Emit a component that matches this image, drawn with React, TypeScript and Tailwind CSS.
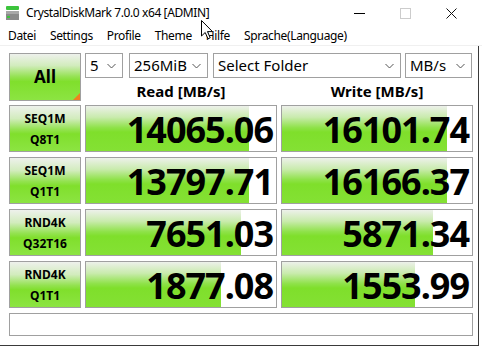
import React from "react";

const rows = [
  { l1: "SEQ1M", l2: "Q8T1", r: "14065.06", rf: 163, w: "16101.74", wf: 165 },
  { l1: "SEQ1M", l2: "Q1T1", r: "13797.71", rf: 163, w: "16166.37", wf: 165 },
  { l1: "RND4K", l2: "Q32T16", r: "7651.03", rf: 155, w: "5871.34", wf: 151 },
  { l1: "RND4K", l2: "Q1T1", r: "1877.08", rf: 135, w: "1553.99", wf: 133 },
];

function Chevron() {
  return (
    <svg width="9" height="6" viewBox="0 0 9 6" className="shrink-0">
      <path d="M0.5 1 L4.5 5 L8.5 1" fill="none" stroke="#555" strokeWidth="1" />
    </svg>
  );
}

function Combo({ text, w }: { text: string; w: string }) {
  return (
    <div className={`${w} h-[25px] border border-[#a0a0a0] bg-white flex items-center justify-between pl-[4px] pr-[6px]`}>
      <span className="text-[15px] leading-none text-black">{text}</span>
      <Chevron />
    </div>
  );
}

function Cell({ value, fill }: { value: string; fill: number }) {
  return (
    <div className="relative w-[192px] h-full border border-[#a0a0a0] bg-white">
      <div
        className="absolute left-0 top-0 bottom-0 bg-[linear-gradient(to_bottom,#edf1ea_0%,#c9ebad_25%,#8fe24a_48%,#7fdf2b_58%,#84e134_100%)]"
        style={{ width: fill }}
      />
      <div className="relative h-full flex items-center justify-end pr-[3px] pt-[3px] text-[36px] font-bold tracking-[-1px] text-black leading-[40px]">
        {value}
      </div>
    </div>
  );
}

function LabelBtn({ l1, l2 }: { l1: string; l2: string }) {
  return (
    <div className="w-[72px] h-full border border-[#a0a0a0] bg-[linear-gradient(to_bottom,#eef1ec_0%,#d2ecbd_28%,#93e250_52%,#80df2c_62%,#8ce442_100%)] flex flex-col items-center justify-center text-[12px] font-bold leading-[21px] text-black">
      <span>{l1}</span>
      <span>{l2}</span>
    </div>
  );
}

export default function App() {
  return (
    <div className="relative w-[482px] h-[347px] bg-white overflow-hidden font-['Noto_Sans',sans-serif] text-black">
      {/* Title bar */}
      <div className="h-[26px] flex items-center">
        <div className="w-[26px] h-full flex items-center justify-center pl-[1px]">
          <svg width="16" height="16" viewBox="0 0 16 16">
            <rect x="0" y="1" width="13" height="4" rx="1" fill="#3cc43c" />
            <rect x="0" y="6" width="13" height="9" fill="#8a8a8a" />
            <rect x="0" y="6" width="13" height="3" fill="#a8a8a8" />
            <rect x="1" y="11" width="3" height="2" fill="#3cc43c" />
          </svg>
        </div>
        <span className="text-[12px] leading-none tracking-[-0.4px]">CrystalDiskMark 7.0.0 x64 [ADMIN]</span>
        <div className="ml-auto flex items-center h-full">
          <div className="w-[46px] h-full flex items-center justify-center">
            <div className="w-[11px] h-px bg-black" />
          </div>
          <div className="w-[46px] h-full flex items-center justify-center">
            <div className="w-[11px] h-[11px] border border-[#cccccc]" />
          </div>
          <div className="w-[46px] h-full flex items-center justify-center">
            <svg width="11" height="11" viewBox="0 0 11 11">
              <path d="M0.5 0.5 L10.5 10.5 M10.5 0.5 L0.5 10.5" stroke="#111" strokeWidth="1" />
            </svg>
          </div>
          <div className="w-[8px]" />
        </div>
      </div>

      {/* Menu bar */}
      <div className="h-[20px] flex items-center gap-[14px] pl-[8px] text-[12px] leading-none tracking-[-0.35px] border-b border-[#f0f0f0]">
        <span>Datei</span>
        <span>Settings</span>
        <span>Profile</span>
        <span>Theme</span>
        <span>Hilfe</span>
        <span>Sprache(Language)</span>
      </div>

      {/* Content */}
      <div className="relative border-r border-b border-[#3a3a3a] w-[479px] h-[300px] pl-[9px] pt-[7px] flex flex-col">
        <div className="flex h-[48px]">
          <div className="relative w-[72px] h-[48px] border border-[#a0a0a0] bg-[linear-gradient(to_bottom,#eef1ec_0%,#d2ecbd_25%,#93e250_50%,#80df2c_60%,#8ce442_100%)] flex items-center justify-center text-[17px] font-bold">
            All
            <div className="absolute right-0 bottom-0 w-0 h-0 border-l-[7px] border-l-transparent border-b-[7px] border-b-[#f08020]" />
          </div>
          <div className="ml-[4px] flex flex-col">
            <div className="flex h-[25px]">
              <Combo text="5" w="w-[38px]" />
              <div className="w-[6px]" />
              <Combo text="256MiB" w="w-[79px]" />
              <div className="w-[5px]" />
              <Combo text="Select Folder" w="w-[188px]" />
              <div className="w-[4px]" />
              <Combo text="MB/s" w="w-[67px]" />
            </div>
            <div className="flex h-[23px] items-center pt-[4px] text-[15px] font-bold leading-none">
              <div className="w-[192px] text-center">Read [MB/s]</div>
              <div className="w-[4px]" />
              <div className="w-[192px] text-center">Write [MB/s]</div>
            </div>
          </div>
        </div>

        <div className="mt-[4px] flex flex-col gap-[5px]">
          {rows.map((r, i) => (
            <div key={i} className="flex h-[47px] gap-[4px]">
              <LabelBtn l1={r.l1} l2={r.l2} />
              <Cell value={r.r} fill={r.rf} />
              <Cell value={r.w} fill={r.wf} />
            </div>
          ))}
        </div>

        <div className="mt-[5px] w-[464px] h-[23px] border border-[#a0a0a0] bg-white" />
      </div>

      {/* Mouse cursor */}
      <svg className="absolute left-[201px] top-[20px]" width="13" height="20" viewBox="0 0 13 20">
        <path d="M0.5 0.5 L0.5 16 L4.2 12.5 L7 18.8 L9.2 17.8 L6.5 11.6 L11.5 11.6 Z" fill="#fff" stroke="#000" strokeWidth="1" strokeLinejoin="miter" />
      </svg>
    </div>
  );
}
